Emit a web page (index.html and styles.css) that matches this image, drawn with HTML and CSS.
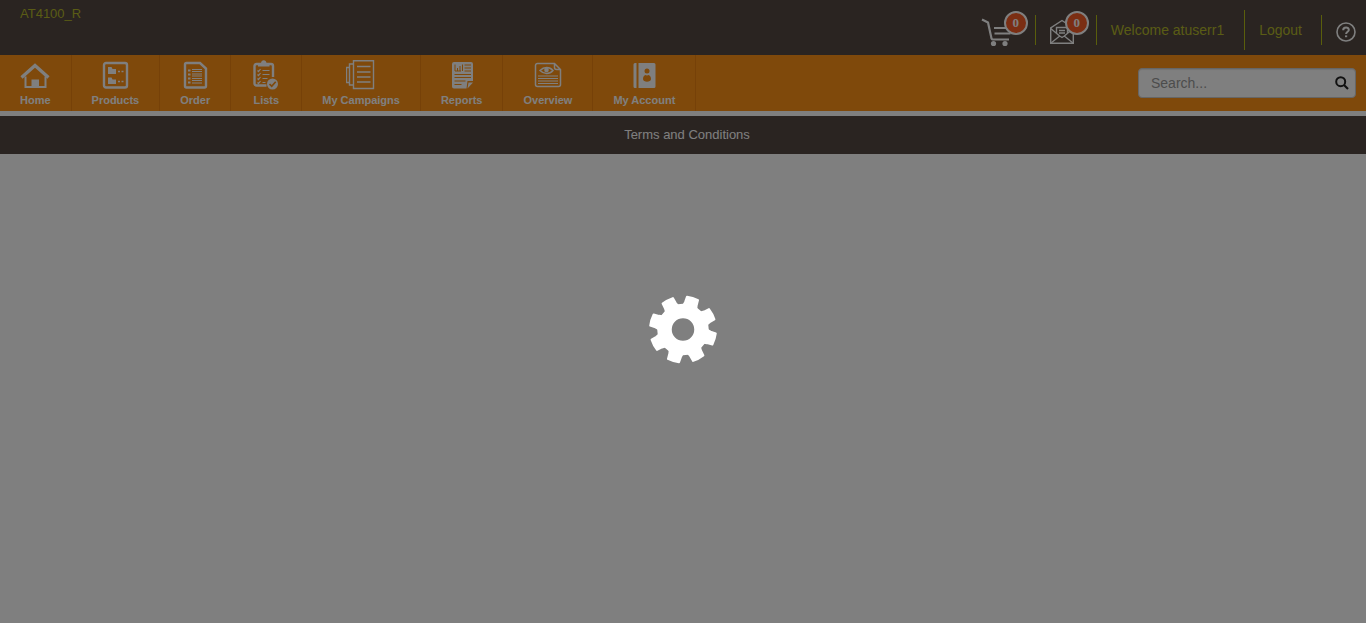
FILE: index.html
```html
<!DOCTYPE html>
<html lang="en">
<head>
<meta charset="utf-8">
<meta name="viewport" content="width=device-width, initial-scale=1">
<title>Terms and Conditions</title>
<link rel="stylesheet" href="styles.css">
</head>
<body>
<header class="topbar">
  <a class="account-name" href="#">AT4100_R</a>
  <div class="tools">
    <a class="tool cart" href="#" aria-label="Cart">
      <svg width="32" height="30" viewBox="0 0 32 30" fill="none" stroke="currentColor" stroke-width="2">
        <path d="M1 2.500l6 3 3.500 16Q11 22.500 12 22.500h16" stroke-width="2.200"/>
        <path d="M13 11h17M13.500 16.500h16" stroke-width="2"/>
        <g fill="currentColor" stroke="none"><circle cx="12.500" cy="26.500" r="2.600"/><circle cx="24" cy="26.500" r="2.600"/></g>
      </svg>
      <span class="badge">0</span>
    </a>
    <a class="tool mail" href="#" aria-label="Messages">
      <svg width="26" height="26" viewBox="0 0 26 26" fill="none" stroke="currentColor" stroke-width="1.400">
        <path d="M.7 9V24.300H23.300V9L12 1.500z"/>
        <path d="M.7 9.500l9 7.500M23.300 9.500l-9 7.500M.7 24.300l9-7.300 2.300 1.500 2.300-1.500 9 7.300"/>
        <path d="M6.500 14V8.500h11V14M9 11.500h6M9 14h6"/>
      </svg>
      <span class="badge">0</span>
    </a>
    <a class="tool welcome" href="#">Welcome atuserr1</a>
    <a class="tool logout" href="#">Logout</a>
    <a class="tool help" href="#" aria-label="Help">
      <svg width="20" height="20" viewBox="0 0 20 20" fill="none" stroke="currentColor">
        <circle cx="10" cy="10" r="9" stroke-width="1.600"/>
        <path d="M7.200 8.200C7.200 4.600 13 4.700 12.800 8c-.1 1.800-2.700 1.800-2.700 4" stroke-width="2"/>
        <path d="M9 13.400h2.200v1.800H9z" fill="currentColor" stroke="none"/>
      </svg>
    </a>
  </div>
</header>

<nav class="mainnav">
  <div class="menu">
    <a class="item" href="#">
      <svg width="30" height="30" viewBox="0 0 30 30" fill="none" stroke="currentColor">
        <path d="M1.500 17.500L15 5.500l13.500 12" stroke-width="3.200"/>
        <path d="M5.500 16.500v10.500h20V16.500" stroke-width="2"/>
        <path d="M11.500 19.500h7.500v8h-7.500z" fill="currentColor" stroke="none"/>
      </svg>
      <span>Home</span>
    </a>
    <a class="item" href="#">
      <svg width="30" height="30" viewBox="0 0 30 30" fill="none" stroke="currentColor">
        <rect x="4" y="3" width="23" height="24.500" rx="2" stroke-width="2.400"/>
        <path d="M8 7h3.500l1 2h3.500v5H8zM8 17.500h3.500l1 2h3.500v4.500H8z" fill="currentColor" stroke="none"/>
        <path d="M18 11.500h2M21.500 11.500h2M18 21.500h2M21.500 21.500h2" stroke-width="1.600"/>
      </svg>
      <span>Products</span>
    </a>
    <a class="item" href="#">
      <svg width="30" height="30" viewBox="0 0 30 30" fill="none" stroke="currentColor">
        <path d="M6.500 3h13.500l6 5.500v17.500a1.500 1.500 0 0 1-1.500 1.500H6.500A1.500 1.500 0 0 1 5 26V4.500A1.500 1.500 0 0 1 6.500 3z" stroke-width="2.400"/>
        <path d="M12 9.500H22M12 11.500H22M12 14H22M12 16H22M12 18.500H22M12 20.500H22M12 23H22" stroke-width="1.200"/>
        <path d="M8 10.500h2.500M8 14.500h2.500M8 18.500h2.500M8 22.500h2.500" stroke-width="2"/>
      </svg>
      <span>Order</span>
    </a>
    <a class="item" href="#">
      <svg width="30" height="30" viewBox="0 0 30 30" fill="none" stroke="currentColor">
        <path d="M15.500 25.500H5.500A2 2 0 0 1 3.500 23.500V6a2 2 0 0 1 2-2h14.500a2 2 0 0 1 2 2V17" stroke-width="2.400"/>
        <path d="M7 6.500V3.500H10C10-.8 15.500-.8 15.500 3.500H18.500v3z" fill="currentColor" stroke="none"/>
        <path d="M6.500 10.500l1 1 2-2.500M6.500 14.500l1 1 2-2.500M6.500 18.500l1 1 2-2.500M6.500 22.500l1 1 2-2.500M11.500 10.500h7M11.500 14.500h7M11.500 18.500h5M11.500 22.500h3" stroke-width="1.200"/>
        <circle cx="21.500" cy="24" r="5.500" fill="currentColor" stroke="none"/>
        <path class="cutline" d="M18.500 24l2.200 2.200 4-4.500" stroke-width="1.700"/>
      </svg>
      <span>Lists</span>
    </a>
    <a class="item" href="#">
      <svg width="30" height="30" viewBox="0 0 30 30" fill="none" stroke="currentColor" stroke-width="1.400">
        <path d="M7.500 .7h20v27.800h-20zM7.500 4h-4v21h4M3.500 7.500h-3V22.500h3"/>
        <path d="M11 6.500h13.500M11 12h13.500M11 17h13.500M11 22h13.500" stroke-width="1.500"/>
      </svg>
      <span>My Campaigns</span>
    </a>
    <a class="item" href="#">
      <svg width="30" height="30" viewBox="0 0 30 30" fill="none">
        <path d="M7 2h17a2 2 0 0 1 2 2v17h-5.500l-1 7.500H7a2 2 0 0 1-2-2V4a2 2 0 0 1 2-2z" fill="currentColor"/>
        <path d="M21.500 22.500h4.500l-5.500 6z" fill="currentColor"/>
        <path class="cutline" d="M8 4.500v6.500M10.500 8v3M13 6v5M15.500 4.500v6.500M8 11h6M17.500 5h6.500M17.500 8h6.500M17.500 11h6.500M7.500 14.500h16.500M7.500 17.500h16.500M7.500 21h11M7.500 24.500h7" stroke-width="1"/>
      </svg>
      <span>Reports</span>
    </a>
    <a class="item" href="#">
      <svg width="30" height="30" viewBox="0 0 30 30" fill="none" stroke="currentColor">
        <path d="M21.500 3.500h-17A2 2 0 0 0 2.500 5.500v19a2 2 0 0 0 2 2h21a2 2 0 0 0 2-2v-15zM21.500 3.500v4a2 2 0 0 0 2 2h4" stroke-width="1.500"/>
        <path d="M7 10.500c4-4 9.500-4 13 0-3.500 4-9 4-13 0z" stroke-width="1.500"/>
        <circle cx="13.500" cy="10" r="2.300" fill="currentColor" stroke="none"/>
        <path d="M5 16h20M5 18.500h20M5 21h20M5 23.500h20" stroke-width="1.100"/>
      </svg>
      <span>Overview</span>
    </a>
    <a class="item" href="#">
      <svg width="30" height="30" viewBox="0 0 30 30" fill="currentColor">
        <path d="M6 3H7.500v25H6a1.500 1.500 0 0 1-1.500-1.500v-22A1.500 1.500 0 0 1 6 3zM9.500 3h15.500A1.500 1.500 0 0 1 26.500 4.500v22a1.500 1.500 0 0 1-1.500 1.500H9.500z"/>
        <circle class="cut" cx="18" cy="11" r="2.500"/>
        <path class="cut" d="M14 19c0-2.500 1.500-4 3-4l1 .7 1-.7c1.500 0 3 1.500 3 4 0 3.500-8 3.500-8 0z"/>
      </svg>
      <span>My Account</span>
    </a>
  </div>
  <form class="search">
    <input class="search-box" type="text" placeholder="Search..." aria-label="Search">
    <button class="search-button" type="submit" aria-label="Search">
      <svg width="14" height="14" viewBox="0 0 14 14" fill="none" stroke="currentColor">
        <circle cx="5.700" cy="5.700" r="4.500" stroke-width="2"/>
        <path d="M9 9l4 4" stroke-width="2.200"/>
      </svg>
    </button>
  </form>
</nav>

<footer class="footer"><a href="#">Terms and Conditions</a></footer>

<div class="overlay" role="status" aria-label="Loading">
  <svg width="70" height="70" viewBox="-35 -34.500 70 70" fill="#fff">
    <defs><path id="tooth" d="M22-7L27-6L32.500-5.800Q33.500 0 32.500 5.800L27 6L22 7z" stroke="#fff" stroke-width="2" stroke-linejoin="round"/></defs>
    <circle r="18.500" fill="none" stroke="#fff" stroke-width="14.500"/>
    <use href="#tooth" transform="rotate(17)"/>
    <use href="#tooth" transform="rotate(62)"/>
    <use href="#tooth" transform="rotate(107)"/>
    <use href="#tooth" transform="rotate(152)"/>
    <use href="#tooth" transform="rotate(197)"/>
    <use href="#tooth" transform="rotate(242)"/>
    <use href="#tooth" transform="rotate(287)"/>
    <use href="#tooth" transform="rotate(332)"/>
  </svg>
</div>
</body>
</html>
```
FILE: styles.css
```css
* { box-sizing: border-box; }

body {
  margin: 0;
  background: #fff;
  font-family: "Liberation Sans", Arial, sans-serif;
  font-size: 14px;
}

a { text-decoration: none; }
svg { display: block; flex: none; }

.topbar {
  display: flex;
  justify-content: space-between;
  align-items: flex-start;
  min-height: 55px;
  padding: 0 10px 0 20px;
  background: #544843;
}

.account-name {
  padding-top: 6px;
  color: #b4b82a;
  font-size: 13px;
  line-height: 16px;
}

.tools {
  display: flex;
  align-items: center;
  padding-top: 10px;
}

.tool {
  display: flex;
  align-items: center;
  height: 30px;
  border-right: 1px solid #b4bc18;
  color: #b4b82a;
}

.cart, .mail {
  position: relative;
  color: #fff;
}

.cart { padding-right: 22px; }
.mail { width: 61px; padding-left: 14px; }

.cart svg, .mail svg, .help svg { margin-top: 3px; }

.badge {
  position: absolute;
  top: -4px;
  right: 7px;
  width: 24px;
  height: 24px;
  border: 2px solid #fff;
  border-radius: 50%;
  background: #f65c26;
  font: bold 13px/20px "Liberation Serif", serif;
  text-align: center;
}

.welcome { height: 40px; padding: 0 20px 0 14px; }
.logout { padding: 0 19px 0 14px; }
.help { padding-left: 14px; border: 0; color: #fff; }

.mainnav {
  display: flex;
  justify-content: space-between;
  align-items: center;
  min-height: 56px;
  padding-right: 10px;
  background: #ff9216;
}

.menu { display: flex; align-self: stretch; }

.item {
  display: flex;
  flex-direction: column;
  align-items: center;
  padding: 5px 20px 0;
  border-right: 1px solid #ec8310;
  color: #fff;
  font-size: 11px;
  font-weight: bold;
  line-height: 12px;
}

.item svg { margin-bottom: 4px; }
.cut { fill: #ff9216; }
.cutline { stroke: #ff9216; }

.search {
  display: flex;
  align-items: center;
  width: 218px;
  height: 30px;
  border: 1px solid #ccc;
  border-radius: 4px;
  background: #fff;
  box-shadow: inset 0 1px 1px rgba(0, 0, 0, .1);
}

.search-box {
  flex: 1;
  min-width: 0;
  padding: 0 0 0 12px;
  border: 0;
  outline: 0;
  background: transparent;
  font: inherit;
}

.search-box::placeholder { color: #999; opacity: 1; }

.search-button {
  padding: 0 6px;
  border: 0;
  background: transparent;
  color: #222;
}

.footer {
  margin-top: 5px;
  padding: 11px 0 11px 8px;
  background: #544843;
  font-size: 13px;
  line-height: 16px;
  text-align: center;
}

.footer a { color: #fff; }

.overlay {
  position: fixed;
  inset: 0;
  display: flex;
  align-items: center;
  justify-content: center;
  padding-top: 36px;
  background: rgba(0, 0, 0, .5);
}
```
